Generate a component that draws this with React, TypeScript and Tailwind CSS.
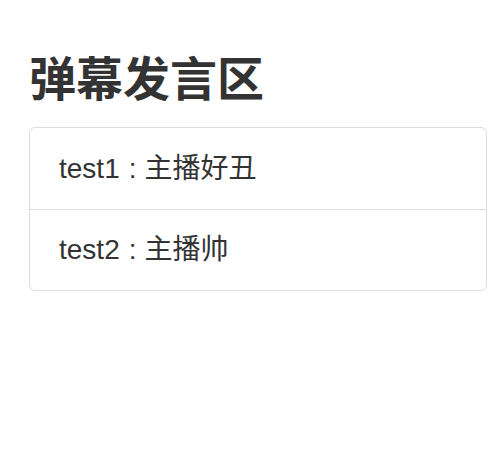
export default function App() {
  const messages = [
    { user: "test1", text: "主播好丑" },
    { user: "test2", text: "主播帅" },
  ];

  return (
    <div className="min-h-[466px] w-[498px] bg-white pl-[29px] pr-[11px] pt-[52px] text-[#333] [font-family:'Liberation_Sans','Noto_Sans_CJK_SC',sans-serif]">
      <h1 className="text-[47px] font-bold leading-[56px]">弹幕发言区</h1>
      <ul className="mt-[19px] rounded-[6px] border border-[#ddd]">
        {messages.map((m, i) => (
          <li
            key={m.user}
            className={`flex h-[81px] items-center px-[29px] text-[28px] ${i > 0 ? "border-t border-[#ddd]" : ""}`}
          >
            {m.user}
            <span className="ml-[9px] mr-[8px]">:</span>
            {m.text}
          </li>
        ))}
      </ul>
    </div>
  );
}
